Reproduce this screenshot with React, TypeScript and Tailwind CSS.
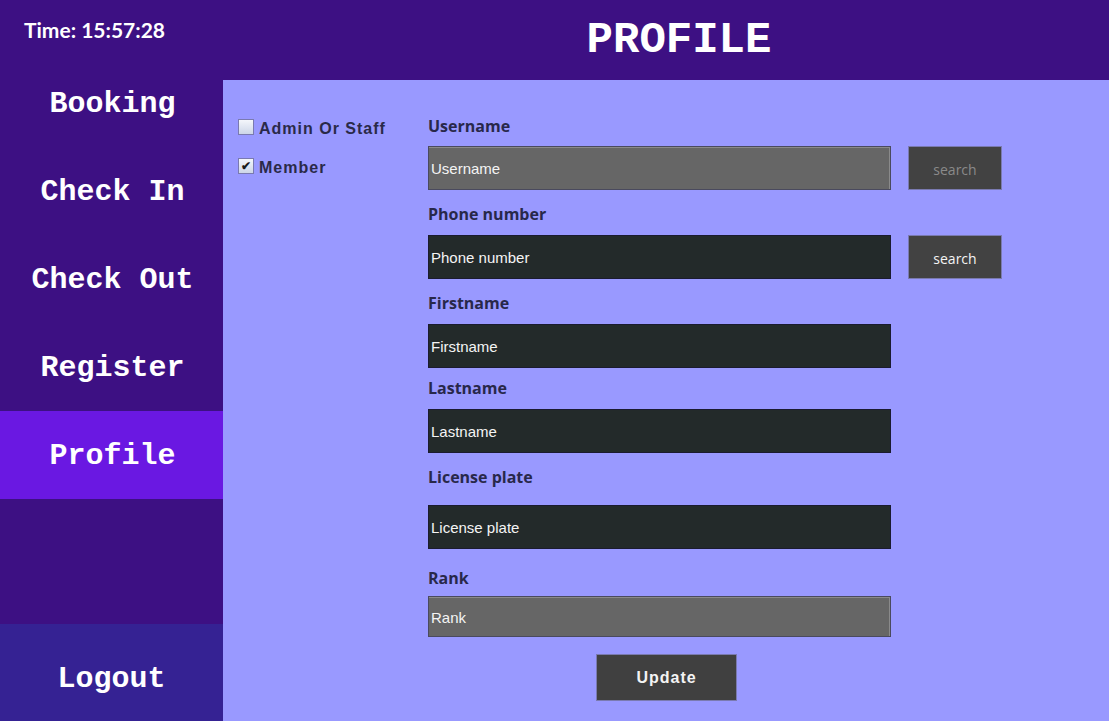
import { useState } from "react";

const NAV = ["Booking", "Check In", "Check Out", "Register", "Profile"];

const mono = "font-['Liberation_Mono','Courier_New',monospace] font-bold";
const label = "font-['Open_Sans',sans-serif] font-bold text-[16px] leading-[20px] text-[#28284a]";

function Field({
    name,
    gray,
    top,
    gap,
    h = 44,
    search,
}: {
    name: string;
    gray?: boolean;
    top: number;
    gap: number;
    h?: number;
    search?: "off" | "on";
}) {
    return (
        <div style={{ marginTop: top }}>
            <div className={label}>{name}</div>
            <div className="flex items-center gap-[17px]" style={{ marginTop: gap }}>
                <div
                    className={
                        gray
                            ? "w-[463px] flex items-center pl-[2px] pt-[3px] bg-[#666666] border border-[#4a4a5e] shadow-[inset_0_1px_0_#8a8a8a,inset_-1px_0_0_#8a8a8a]"
                            : "w-[463px] flex items-center pl-[2px] pt-[3px] bg-[#232a2a] border border-[#1b1b30]"
                    }
                    style={{ height: h }}
                >
                    <span className="font-['Liberation_Sans',Arial,sans-serif] text-[15px] text-[#f4f4f4]">{name}</span>
                </div>
                {search && (
                    <button
                        className={
                            "w-[94px] h-[44px] pt-[2px] bg-[#424242] border border-[#7a7ab0] font-['Open_Sans',sans-serif] text-[14px] " +
                            (search === "off" ? "text-[#8a8a8a]" : "text-[#f4f4f4]")
                        }
                    >
                        search
                    </button>
                )}
            </div>
        </div>
    );
}

export default function App() {
    const [now] = useState("15:57:28");

    return (
        <div className="flex w-[1109px] h-[721px] overflow-hidden bg-[#9999ff]">
            {/* Sidebar */}
            <div className="w-[223px] flex flex-col bg-[#3d1083] text-white">
                <div className="h-[59px] pl-[24px] pt-[17px] font-['Lato',sans-serif] font-bold text-[21px] leading-[26px]">
                    Time: {now}
                </div>
                {NAV.map((item) => (
                    <div
                        key={item}
                        className={
                            "h-[88px] flex items-center justify-center pl-[2px] pt-[3px] text-[30px] " +
                            mono +
                            (item === "Profile" ? " bg-[#6a18e2]" : "")
                        }
                    >
                        {item}
                    </div>
                ))}
                <div className="flex-1" />
                <div className={"h-[97px] flex items-center justify-center pt-[14px] bg-[#352293] text-[30px] " + mono}>
                    Logout
                </div>
            </div>

            {/* Main */}
            <div className="flex-1 flex flex-col">
                <div className="h-[80px] flex items-center justify-center pl-[26px] bg-[#3d1083]">
                    <h1 className={"text-[44px] text-white leading-none " + mono}>PROFILE</h1>
                </div>
                <div className="flex-1 flex pl-[15px]">
                    <div className="w-[190px] pt-[39px] flex flex-col gap-[23px] font-['Liberation_Sans',Arial,sans-serif] font-bold text-[16px] tracking-[1px] text-[#2a2a48]">
                        <label className="flex items-center gap-[5px] h-[16px]">
                            <span className="w-[16px] h-[16px] border border-[#7a7ab0] bg-gradient-to-b from-[#f4f6fb] to-[#cdd6e8]" />
                            <span className="mt-[4px]">Admin Or Staff</span>
                        </label>
                        <label className="flex items-center gap-[5px] h-[16px]">
                            <span className="w-[16px] h-[16px] border border-[#7a7ab0] bg-gradient-to-b from-[#f4f6fb] to-[#cdd6e8] flex items-center justify-center text-[12px] leading-none text-[#1a1a1a] tracking-normal">
                                ✔
                            </span>
                            <span className="mt-[4px]">Member</span>
                        </label>
                    </div>
                    <div className="flex flex-col">
                        <Field name="Username" gray top={36} gap={10} search="off" />
                        <Field name="Phone number" top={14} gap={11} search="on" />
                        <Field name="Firstname" top={14} gap={11} />
                        <Field name="Lastname" top={10} gap={11} />
                        <Field name="License plate" top={14} gap={18} />
                        <Field name="Rank" gray top={19} gap={8} h={41} />
                        <div className="flex mt-[17px] pl-[168px]">
                            <button className="w-[141px] h-[47px] bg-[#404040] border border-[#7a7ab0] font-['Liberation_Sans',Arial,sans-serif] font-bold text-[16px] tracking-[1px] text-[#f4f4f4]">
                                Update
                            </button>
                        </div>
                    </div>
                </div>
            </div>
        </div>
    );
}
